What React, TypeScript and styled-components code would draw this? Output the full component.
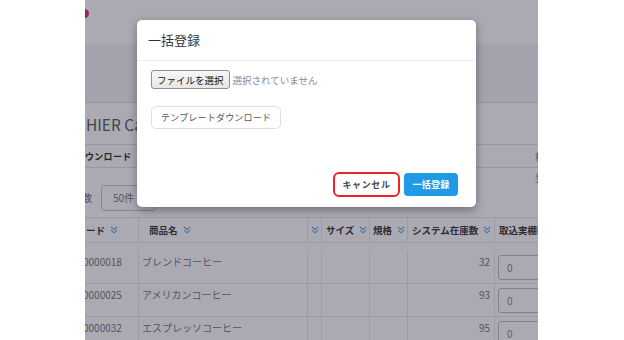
import React from "react";
import styled, { createGlobalStyle } from "styled-components";

const GlobalStyle = createGlobalStyle`
  html, body { margin: 0; padding: 0; background: #ffffff; }
  body { font-family: "Noto Sans CJK JP", "Noto Sans", sans-serif; }
  * { box-sizing: border-box; }
`;

const Screen = styled.div`
  width: 624px;
  height: 340px;
  display: flex;
  padding-left: 85px;
  background: #ffffff;
`;

const Frame = styled.div`
  position: relative;
  width: 453px;
  height: 340px;
  overflow: hidden;
  background: #ffffff;
`;

const Page = styled.div`
  display: flex;
  flex-direction: column;
  width: 453px;
`;

const NavBar = styled.header`
  height: 44px;
  display: flex;
  align-items: flex-start;
  background: #ffffff;
`;

const BrandDot = styled.span`
  width: 9px;
  height: 9px;
  border-radius: 50%;
  background: #e2307c;
  margin: 9px 0 0 -5px;
`;

const SubHeader = styled.div`
  height: 59px;
  background: #f3f3f6;
  border-bottom: 1px solid #dcdce2;
`;

const TitleRow = styled.div`
  height: 42px;
  display: flex;
  align-items: center;
  padding-left: 1px;
  font-size: 15.5px;
  color: #606068;
  border-bottom: 1px solid #e0e0e4;
  white-space: nowrap;
`;

const TabRow = styled.div`
  height: 23px;
  display: flex;
  align-items: center;
  justify-content: space-between;
  border-bottom: 1px solid #e0e0e4;
  white-space: nowrap;
`;

const TabLabel = styled.span`
  font-size: 9px;
  font-weight: 700;
  color: #333;
  letter-spacing: 0.3px;
`;

const EdgeText = styled.span<{ $tone: "gray" | "blue" }>`
  font-size: 10px;
  color: ${(p) => (p.$tone === "blue" ? "#1a8ee0" : "#777")};
  margin-right: -17px;
  white-space: nowrap;
`;

const FilterRow = styled.div`
  height: 49px;
  display: flex;
  align-items: flex-start;
  white-space: nowrap;
`;

const FilterLabel = styled.span`
  margin: 17px 0 0 -3px;
  font-size: 10px;
  line-height: 26px;
  color: #666;
`;

const SelectBox = styled.div`
  margin: 17px 0 0 9px;
  width: 55px;
  height: 26px;
  border: 1px solid #c6c6cc;
  border-radius: 3px;
  padding-left: 11px;
  font-size: 10px;
  line-height: 24px;
  color: #777;
`;

const FilterEdge = styled.div`
  margin: 2px 0 0 auto;
  display: flex;
`;

const Table = styled.div`
  display: grid;
  grid-template-columns: 54px 169px 14px 48px 38px 87px 90px;
  grid-auto-rows: 33px;
  width: 500px;
  border-top: 1px solid #e4e4e8;
`;

const HeadCell = styled.div<{ $pad?: number }>`
  height: 25px;
  display: flex;
  align-items: center;
  gap: 5px;
  padding-left: ${(p) => p.$pad ?? 4}px;
  border-right: 1px solid #e6e6ea;
  border-bottom: 1px solid #e6e6ea;
  font-size: 9.5px;
  font-weight: 700;
  color: #3a3a3a;
  white-space: nowrap;
  overflow: hidden;
`;

const HeadRow = styled.div`
  display: contents;
`;

const Cell = styled.div<{ $align?: "left" | "right" }>`
  padding: 4px 4px 0 3px;
  text-align: ${(p) => p.$align ?? "left"};
  font-size: 10px;
  line-height: 14px;
  color: #7a7a7a;
  border-right: 1px solid #e6e6ea;
  border-bottom: 1px solid #e6e6ea;
  white-space: nowrap;
  overflow: hidden;
`;

const CodeText = styled.span`
  display: inline-block;
  margin-left: -5px;
`;

const QtyInput = styled.div`
  width: 80px;
  height: 25px;
  border: 1px solid #bdbdc4;
  border-radius: 3px;
  padding-left: 8px;
  font-size: 10px;
  line-height: 23px;
  color: #888;
`;

const Overlay = styled.div`
  position: absolute;
  inset: 0;
  background: rgba(22, 20, 44, 0.36);
`;

const Modal = styled.div`
  position: absolute;
  left: 52px;
  top: 20px;
  width: 339px;
  height: 187px;
  background: #ffffff;
  border-radius: 5px;
  box-shadow: 0 3px 10px rgba(0, 0, 0, 0.35);
  display: flex;
  flex-direction: column;
`;

const ModalHeader = styled.div`
  height: 41px;
  padding: 0 11px 2px;
  display: flex;
  align-items: center;
  border-bottom: 1px solid #eceef1;
  font-size: 13px;
  color: #333;
`;

const ModalBody = styled.div`
  flex: 1;
  padding: 9px 14px 0;
  display: flex;
  flex-direction: column;
  align-items: flex-start;
`;

const FileRow = styled.div`
  display: flex;
  align-items: center;
  gap: 3px;
`;

const FileButton = styled.button`
  height: 19px;
  padding: 0 5px;
  font-family: inherit;
  font-size: 9.5px;
  color: #111;
  border: 1px solid #8e8e8e;
  border-radius: 3px;
  background: linear-gradient(#f7f7f7, #e6e6e6);
`;

const NoFile = styled.span`
  font-size: 9.5px;
  color: #8a8a9c;
`;

const TemplateButton = styled.button`
  margin-top: 17px;
  height: 23px;
  padding: 0 9px;
  border: 1px solid #d9dfe8;
  border-radius: 5px;
  background: #ffffff;
  font-family: inherit;
  font-size: 9px;
  letter-spacing: 0.2px;
  color: #555;
`;

const ModalFooter = styled.div`
  display: flex;
  justify-content: flex-end;
  align-items: center;
  gap: 4px;
  padding: 0 18px 10px;
`;

const FooterButton = styled.button<{ $variant: "cancel" | "primary" }>`
  font-family: inherit;
  font-size: 9px;
  font-weight: 700;
  letter-spacing: ${(p) => (p.$variant === "cancel" ? "0.6px" : "0.2px")};
  width: ${(p) => (p.$variant === "cancel" ? "67px" : "54px")};
  height: ${(p) => (p.$variant === "cancel" ? "25px" : "23px")};
  border-radius: ${(p) => (p.$variant === "cancel" ? "6px" : "4px")};
  border: ${(p) => (p.$variant === "cancel" ? "2px solid #e5262b" : "none")};
  background: ${(p) => (p.$variant === "cancel" ? "#ffffff" : "#1f9be6")};
  color: ${(p) => (p.$variant === "cancel" ? "#4a4a4a" : "#ffffff")};
  padding: 0;
`;

const SortIcon = () => (
  <svg width="8" height="8" viewBox="0 0 8 8" fill="none" stroke="#5aa8e6" strokeWidth="1.1">
    <polyline points="1,1 4,3.6 7,1" />
    <polyline points="1,4.2 4,6.8 7,4.2" />
  </svg>
);

const rows = [
  { code: "0000018", name: "ブレンドコーヒー", stock: 32 },
  { code: "0000025", name: "アメリカンコーヒー", stock: 93 },
  { code: "0000032", name: "エスプレッソコーヒー", stock: 95 },
];

export default function App() {
  return (
    <>
      <GlobalStyle />
      <Screen>
        <Frame>
          <Page>
            <NavBar>
              <BrandDot />
            </NavBar>
            <SubHeader />
            <TitleRow>HIER Cafe 本店</TitleRow>
            <TabRow>
              <TabLabel>ウンロード</TabLabel>
              <EdgeText $tone="gray">検索</EdgeText>
            </TabRow>
            <FilterRow>
              <FilterLabel>数</FilterLabel>
              <SelectBox>50件</SelectBox>
              <FilterEdge>
                <EdgeText $tone="blue">登録</EdgeText>
              </FilterEdge>
            </FilterRow>
            <Table>
              <HeadRow>
                <HeadCell $pad={1}>ード <SortIcon /></HeadCell>
                <HeadCell $pad={10}>商品名 <SortIcon /></HeadCell>
                <HeadCell $pad={3}><SortIcon /></HeadCell>
                <HeadCell>サイズ <SortIcon /></HeadCell>
                <HeadCell $pad={3}>規格 <SortIcon /></HeadCell>
                <HeadCell>システム在庫数 <SortIcon /></HeadCell>
                <HeadCell>取込実棚数</HeadCell>
              </HeadRow>
              {rows.map((r) => (
                <React.Fragment key={r.code}>
                  <Cell><CodeText>{r.code}</CodeText></Cell>
                  <Cell>{r.name}</Cell>
                  <Cell />
                  <Cell />
                  <Cell />
                  <Cell $align="right">{r.stock}</Cell>
                  <Cell>
                    <QtyInput>0</QtyInput>
                  </Cell>
                </React.Fragment>
              ))}
            </Table>
          </Page>
          <Overlay />
          <Modal>
            <ModalHeader>一括登録</ModalHeader>
            <ModalBody>
              <FileRow>
                <FileButton>ファイルを選択</FileButton>
                <NoFile>選択されていません</NoFile>
              </FileRow>
              <TemplateButton>テンプレートダウンロード</TemplateButton>
            </ModalBody>
            <ModalFooter>
              <FooterButton $variant="cancel">キャンセル</FooterButton>
              <FooterButton $variant="primary">一括登録</FooterButton>
            </ModalFooter>
          </Modal>
        </Frame>
      </Screen>
    </>
  );
}
